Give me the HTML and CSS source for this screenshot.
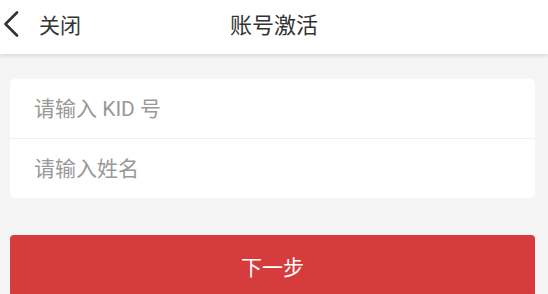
FILE: index.html
```html
<!DOCTYPE html>
<html lang="zh-CN">
<head>
<meta charset="utf-8">
<title>账号激活</title>
<link rel="stylesheet" href="styles.css">
</head>
<body>
<header class="topbar">
  <a class="back">
    <svg class="chev" width="16" height="26" viewBox="0 0 16 26"><path d="M14 1.5 L2.5 13 L14 24.5" fill="none" stroke="#333" stroke-width="2.6" stroke-linecap="round" stroke-linejoin="round"/></svg>
    <span class="back-text">关闭</span>
  </a>
  <h1 class="title">账号激活</h1>
</header>
<main class="content">
  <div class="card">
    <div class="row"><input class="field" placeholder="请输入 KID 号"></div>
    <div class="row"><input class="field" placeholder="请输入姓名"></div>
  </div>
  <button class="next">下一步</button>
</main>
</body>
</html>
```
FILE: styles.css
```css
html, body {
  margin: 0;
  padding: 0;
  background: #f5f5f5;
  font-family: Roboto, "Noto Sans CJK SC", sans-serif;
  overflow: hidden;
}
.topbar {
  position: relative;
  height: 54px;
  background: #fff;
  box-shadow: 0 2px 4px rgba(0, 0, 0, 0.12);
  display: flex;
  align-items: center;
  justify-content: center;
}
.back {
  position: absolute;
  left: 3px;
  top: 0;
  height: 48px;
  display: flex;
  align-items: center;
  color: #333;
}
.chev {
  display: block;
}
.back-text {
  margin-left: 20px;
  font-size: 21px;
  color: #333;
}
.title {
  margin: 0 0 8px;
  font-size: 22px;
  font-weight: normal;
  color: #333;
}
.content {
  padding: 25px 13px 0 10px;
  display: flex;
  flex-direction: column;
}
.card {
  background: #fff;
  border-radius: 5px;
  overflow: hidden;
}
.row {
  height: 59px;
  display: flex;
  align-items: center;
}
.row + .row {
  border-top: 1px solid #f0f0f0;
}
.field {
  border: none;
  outline: none;
  background: transparent;
  font-family: inherit;
  font-size: 21px;
  color: #333;
  padding: 0 0 0 24px;
  width: 100%;
  height: 100%;
}
.field::placeholder {
  color: #999;
}
.next {
  margin-top: 37px;
  height: 62px;
  border: none;
  border-radius: 4px;
  background: #d63c3c;
  color: #fff;
  font-family: inherit;
  font-size: 21px;
  padding: 0;
}
```
